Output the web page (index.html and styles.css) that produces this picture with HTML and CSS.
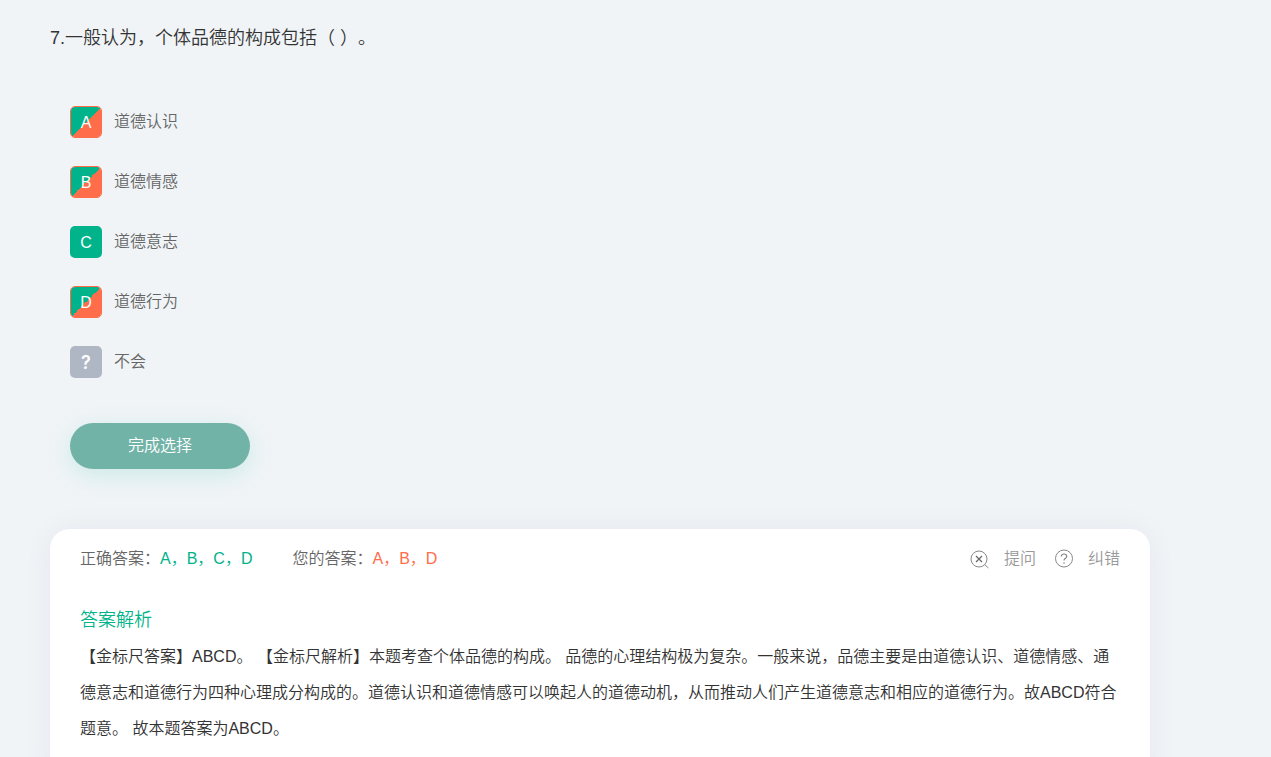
FILE: index.html
```html
<!DOCTYPE html>
<html lang="zh-CN">
<head>
    <meta charset="UTF-8">
    <meta name="viewport" content="width=device-width, initial-scale=1.0">
    <title>答案解析</title>
    <link rel="stylesheet" href="styles.css">
</head>
<body>
    <main class="container">
        <h1 class="question">7.一般认为，个体品德的构成包括（ ）。</h1>

        <div class="options">
            <button type="button" class="option"><span class="mark both">A</span>道德认识</button>
            <button type="button" class="option"><span class="mark both">B</span>道德情感</button>
            <button type="button" class="option"><span class="mark right">C</span>道德意志</button>
            <button type="button" class="option"><span class="mark both">D</span>道德行为</button>
            <button type="button" class="option"><span class="mark unknown">?</span>不会</button>
        </div>

        <button type="button" class="submit">完成选择</button>

        <section class="card">
            <div class="card-head">
                <p class="answer">正确答案：<span class="green">A，B，C，D</span></p>
                <p class="answer">您的答案：<span class="orange">A，B，D</span></p>
                <div class="actions">
                    <button type="button" class="action">
                        <svg class="icon" viewBox="0 0 20 20" fill="none" stroke="#888" aria-hidden="true">
                            <circle cx="9" cy="10" r="8"/>
                            <path d="M14.8 15.7L18.5 19"/>
                            <path d="M6 7L12 13M12 7L6 13" stroke="#666" stroke-width="1.2"/>
                        </svg>
                        提问
                    </button>
                    <button type="button" class="action">
                        <svg class="icon" viewBox="0 0 20 20" fill="none" stroke="#888" aria-hidden="true">
                            <circle cx="10" cy="9.5" r="8.5"/>
                            <path d="M7.3 7.6C7.3 5.8 8.4 5 10 5S12.7 6 12.7 7.4C12.7 9.3 10 9.4 10 11.6" stroke-width="1.2"/>
                            <circle cx="10" cy="14" r=".8" fill="#888" stroke="none"/>
                        </svg>
                        纠错
                    </button>
                </div>
            </div>
            <h2 class="analysis-title">答案解析</h2>
            <p class="analysis">【金标尺答案】ABCD。 【金标尺解析】本题考查个体品德的构成。 品德的心理结构极为复杂。一般来说，品德主要是由道德认识、道德情感、通德意志和道德行为四种心理成分构成的。道德认识和道德情感可以唤起人的道德动机，从而推动人们产生道德意志和相应的道德行为。故ABCD符合题意。 故本题答案为ABCD。</p>
        </section>
    </main>
</body>
</html>
```
FILE: styles.css
```css
* {
    box-sizing: border-box;
}
body {
    margin: 0;
    padding: 20px 50px 0;
    background-color: #f0f4f7;
    color: #333;
    font-family: "Liberation Sans", "Noto Sans CJK SC", sans-serif;
    font-size: 16px;
    font-weight: 350;
    text-spacing-trim: space-all;
}
button {
    padding: 0;
    border: none;
    background: none;
    color: inherit;
    font: inherit;
    cursor: pointer;
}
h1, h2, p {
    margin: 0;
    font-weight: inherit;
}
.container {
    max-width: 1100px;
}
.question {
    font-size: 18px;
    line-height: 36px;
}
.options {
    display: flex;
    flex-direction: column;
    align-items: flex-start;
    gap: 28px;
    padding: 50px 20px 0;
}
.option {
    display: flex;
    align-items: center;
    gap: 12px;
    color: #666;
    line-height: 32px;
}
.mark {
    width: 32px;
    height: 32px;
    border: 1px solid transparent;
    border-radius: 5px;
    color: #fff;
    line-height: 32px;
    text-align: center;
}
.both {
    border-color: #ff6d4a;
    background: linear-gradient(135deg, #00b38a 50%, #ff6d4a 50%) padding-box;
}
.right {
    background-color: #00b38a;
}
.unknown {
    background-color: #afb7c4;
    font-family: Inter, sans-serif;
    font-size: 18px;
    font-weight: 600;
}
.submit {
    display: block;
    width: 180px;
    margin: 45px 20px 60px;
    border-radius: 23px;
    background-color: #72b3a8;
    box-shadow: 0 6px 25px rgba(0, 179, 138, 0.15);
    color: #fff;
    line-height: 46px;
}
.card {
    padding: 12px 30px 40px;
    border-radius: 20px;
    background-color: #fff;
    box-shadow: 0 0 30px rgba(0, 30, 50, 0.05);
}
.card-head {
    display: flex;
    gap: 40px;
    color: #666;
    line-height: 36px;
}
.green, .analysis-title {
    color: #00b38a;
}
.orange {
    color: #ff6d4a;
}
.actions {
    display: flex;
    gap: 18px;
    margin-left: auto;
    color: #999;
}
.action {
    display: flex;
    align-items: center;
    gap: 14px;
}
.icon {
    width: 20px;
    height: 20px;
}
.analysis-title {
    margin-top: 24px;
    font-size: 18px;
    line-height: 38px;
}
.analysis {
    line-height: 36px;
}
```
